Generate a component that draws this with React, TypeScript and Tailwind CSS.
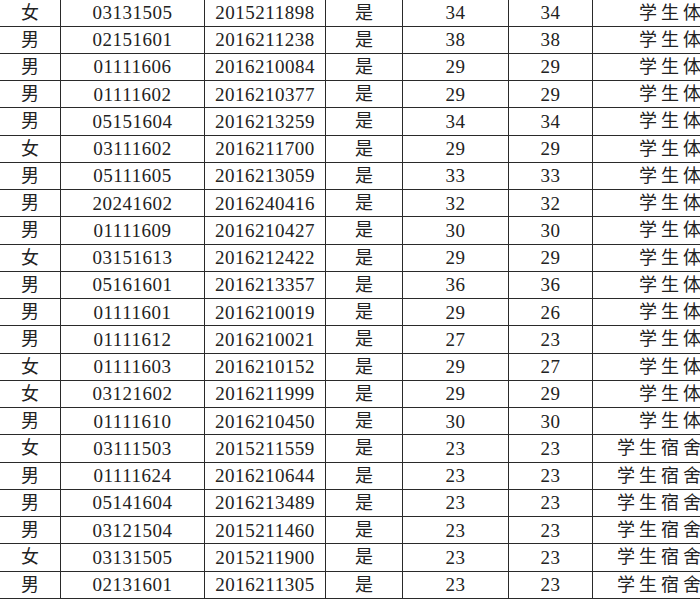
const rows = [
  ["女", "03131505", "2015211898", "是", "34", "34", "学生体育馆"],
  ["男", "02151601", "2016211238", "是", "38", "38", "学生体育馆"],
  ["男", "01111606", "2016210084", "是", "29", "29", "学生体育馆"],
  ["男", "01111602", "2016210377", "是", "29", "29", "学生体育馆"],
  ["男", "05151604", "2016213259", "是", "34", "34", "学生体育馆"],
  ["女", "03111602", "2016211700", "是", "29", "29", "学生体育馆"],
  ["男", "05111605", "2016213059", "是", "33", "33", "学生体育馆"],
  ["男", "20241602", "2016240416", "是", "32", "32", "学生体育馆"],
  ["男", "01111609", "2016210427", "是", "30", "30", "学生体育馆"],
  ["女", "03151613", "2016212422", "是", "29", "29", "学生体育馆"],
  ["男", "05161601", "2016213357", "是", "36", "36", "学生体育馆"],
  ["男", "01111601", "2016210019", "是", "29", "26", "学生体育馆"],
  ["男", "01111612", "2016210021", "是", "27", "23", "学生体育馆"],
  ["女", "01111603", "2016210152", "是", "29", "27", "学生体育馆"],
  ["女", "03121602", "2016211999", "是", "29", "29", "学生体育馆"],
  ["男", "01111610", "2016210450", "是", "30", "30", "学生体育馆"],
  ["女", "03111503", "2015211559", "是", "23", "23", "学生宿舍管理处"],
  ["男", "01111624", "2016210644", "是", "23", "23", "学生宿舍管理处"],
  ["男", "05141604", "2016213489", "是", "23", "23", "学生宿舍管理处"],
  ["男", "03121504", "2015211460", "是", "23", "23", "学生宿舍管理处"],
  ["女", "03131505", "2015211900", "是", "23", "23", "学生宿舍管理处"],
  ["男", "02131601", "2016211305", "是", "23", "23", "学生宿舍管理处"],
];

const cjk = "font-['Liberation_Serif','Noto_Sans_CJK_SC',serif] text-[18px]";
const num = "font-['Liberation_Serif',serif] text-[19px] tracking-[0.5px]";

export default function App() {
  return (
    <div className="w-[700px] h-[600px] overflow-hidden bg-white text-[#222]">
      <div className="w-[795px]">
        {rows.map((r, i) => (
          <div
            key={i}
            className={`grid grid-cols-[61px_144px_121px_77px_106px_84px_1fr] border-b border-[#2a2a2a] leading-none ${
              i === 0 ? "h-[26.5px]" : "h-[27.25px]"
            }`}
          >
            <div className={`flex items-center justify-center border-r border-[#2a2a2a] ${cjk}`}>{r[0]}</div>
            <div className={`flex items-center justify-center border-r border-[#2a2a2a] ${num}`}>{r[1]}</div>
            <div className={`flex items-center justify-center border-r border-[#2a2a2a] ${num}`}>{r[2]}</div>
            <div className={`flex items-center justify-center border-r border-[#2a2a2a] ${cjk}`}>{r[3]}</div>
            <div className={`flex items-center justify-center border-r border-[#2a2a2a] ${num}`}>{r[4]}</div>
            <div className={`flex items-center justify-center border-r border-[#2a2a2a] ${num}`}>{r[5]}</div>
            <div className={`flex items-center justify-center tracking-[4px] ${cjk}`}>{r[6]}</div>
          </div>
        ))}
      </div>
    </div>
  );
}
